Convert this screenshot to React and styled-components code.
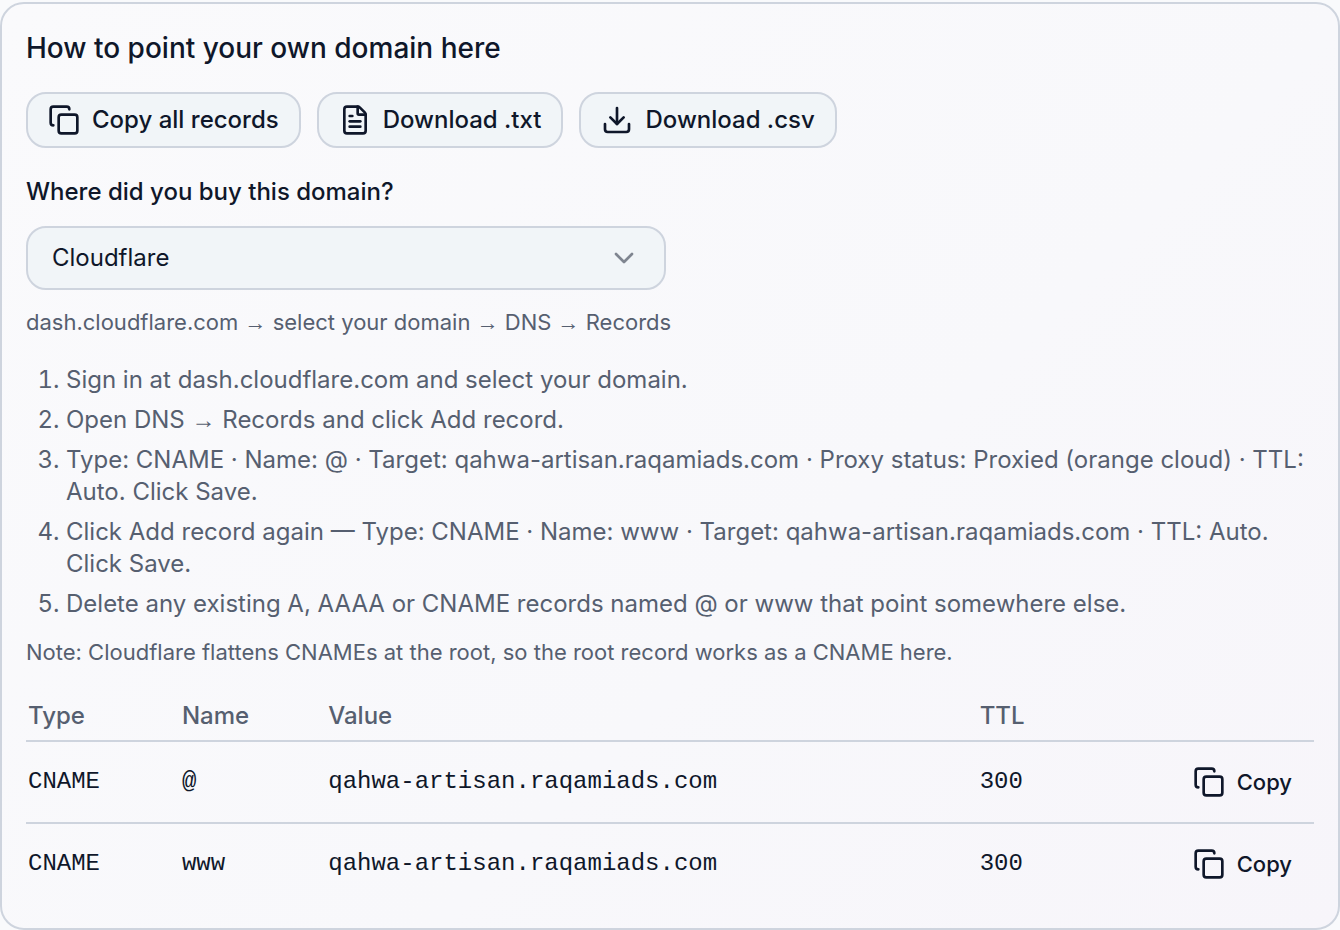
import { useState } from "react";
import styled, { createGlobalStyle } from "styled-components";
import { ChevronDown, Copy, Download, FileText } from "lucide-react";

const GlobalStyle = createGlobalStyle`
  * {
    box-sizing: border-box;
  }
  body {
    margin: 0;
    background: #f9fafc;
    color: #0f172a;
    font-family: Inter, "Liberation Sans", sans-serif;
    font-size: 24px;
    line-height: 32px;
  }
  button,
  select {
    font: inherit;
    color: inherit;
  }
`;

const Card = styled.section`
  margin-top: 2px;
  padding: 24px;
  border: 2px solid #ced4de;
  border-radius: 24px;
  background: linear-gradient(135deg, #fafafc 0%, #f8f8fb 60%, #f7f5fa 100%);
`;

const Title = styled.h2`
  margin: 0 0 24px;
  font-size: 28px;
  font-weight: 500;
  line-height: 40px;
`;

const Toolbar = styled.div`
  display: flex;
  flex-wrap: wrap;
  gap: 16px;
  margin-bottom: 24px;
`;

const Button = styled.button`
  display: inline-flex;
  align-items: center;
  gap: 12px;
  height: 56px;
  padding: 0 20px;
  border: ${props => (props.$ghost ? "none" : "2px solid #ced4de")};
  border-radius: 20px;
  background: ${props => (props.$ghost ? "transparent" : "#f1f5f8")};
  font-size: ${props => (props.$ghost ? "22px" : "24px")};
  font-weight: 500;
  white-space: nowrap;
  cursor: pointer;
`;

const Label = styled.label`
  display: block;
  margin-bottom: 14px;
  font-weight: 500;
  line-height: 40px;
`;

const SelectWrap = styled.div`
  position: relative;
  max-width: 640px;
  margin-bottom: 16px;

  svg {
    position: absolute;
    top: 16px;
    right: 26px;
    opacity: 0.5;
    pointer-events: none;
  }
`;

const Select = styled.select`
  display: block;
  width: 100%;
  height: 64px;
  padding: 0 64px 0 24px;
  border: 2px solid #ced4de;
  border-radius: 20px;
  background: #f1f5f8;
  appearance: none;
`;

const Hint = styled.p`
  margin: 0;
  color: #565f70;
  font-size: 22px;
`;

const Steps = styled.ol`
  display: grid;
  gap: 8px;
  margin: 26px 0 16px;
  padding-left: 40px;
  color: #565f70;
`;

const Arrow = styled.span`
  font-family: "Liberation Sans", sans-serif;
  line-height: 1;
`;

const Table = styled.table`
  width: 100%;
  margin-top: 24px;
  border-collapse: collapse;
  text-align: left;

  th {
    padding: 8px 24px 8px 2px;
    color: #565f70;
    font-weight: 500;
  }
  tr {
    border-bottom: 2px solid #ced4de;
  }
  tbody tr:last-child {
    border-bottom: none;
  }
  td {
    padding: 12px 24px 12px 2px;
    font-family: "Liberation Mono", monospace;
  }
  th:last-child,
  td:last-child {
    padding-right: 2px;
    text-align: right;
  }
  td:last-child {
    font-family: inherit;
  }
  td button {
    vertical-align: top;
  }
`;

const target = "qahwa-artisan.raqamiads.com";

const records = [
  { type: "CNAME", name: "@", value: target, ttl: 300 },
  { type: "CNAME", name: "www", value: target, ttl: 300 },
];

const steps = [
  "Sign in at dash.cloudflare.com and select your domain.",
  "Open DNS → Records and click Add record.",
  `Type: CNAME · Name: @ · Target: ${target} · Proxy status: Proxied (orange cloud) · TTL: Auto. Click Save.`,
  `Click Add record again — Type: CNAME · Name: www · Target: ${target} · TTL: Auto. Click Save.`,
  "Delete any existing A, AAAA or CNAME records named @ or www that point somewhere else.",
];

function toLines(separator) {
  return records.map(r => [r.type, r.name, r.value, r.ttl].join(separator)).join("\n");
}

function copyText(text) {
  navigator.clipboard?.writeText(text).catch(err => console.error(err));
}

function download(fileName, text) {
  const url = URL.createObjectURL(new Blob([text], { type: "text/plain" }));
  const link = document.createElement("a");
  link.href = url;
  link.download = fileName;
  link.click();
  URL.revokeObjectURL(url);
}

function withArrows(text) {
  return text.split(/(→)/).map((part, i) => (part === "→" ? <Arrow key={i}>→</Arrow> : part));
}

function App() {
  const [registrar, setRegistrar] = useState("cloudflare");

  return (
    <>
      <GlobalStyle />
      <Card>
        <Title>How to point your own domain here</Title>
        <Toolbar>
          <Button type="button" onClick={() => copyText(toLines(" "))}>
            <Copy size={32} />
            Copy all records
          </Button>
          <Button type="button" onClick={() => download("records.txt", toLines(" "))}>
            <FileText size={32} />
            Download .txt
          </Button>
          <Button type="button" onClick={() => download("records.csv", toLines(","))}>
            <Download size={32} />
            Download .csv
          </Button>
        </Toolbar>

        <Label htmlFor="registrar">Where did you buy this domain?</Label>
        <SelectWrap>
          <Select id="registrar" value={registrar} onChange={e => setRegistrar(e.target.value)}>
            <option value="cloudflare">Cloudflare</option>
          </Select>
          <ChevronDown size={32} />
        </SelectWrap>

        <Hint>{withArrows("dash.cloudflare.com → select your domain → DNS → Records")}</Hint>
        <Steps>
          {steps.map(step => (
            <li key={step}>{withArrows(step)}</li>
          ))}
        </Steps>
        <Hint>Note: Cloudflare flattens CNAMEs at the root, so the root record works as a CNAME here.</Hint>

        <Table>
          <thead>
            <tr>
              <th scope="col">Type</th>
              <th scope="col">Name</th>
              <th scope="col">Value</th>
              <th scope="col">TTL</th>
              <th />
            </tr>
          </thead>
          <tbody>
            {records.map(record => (
              <tr key={record.name}>
                <td>{record.type}</td>
                <td>{record.name}</td>
                <td>{record.value}</td>
                <td>{record.ttl}</td>
                <td>
                  <Button type="button" $ghost onClick={() => copyText(record.value)}>
                    <Copy size={32} />
                    Copy
                  </Button>
                </td>
              </tr>
            ))}
          </tbody>
        </Table>
      </Card>
    </>
  );
}

export default App;
